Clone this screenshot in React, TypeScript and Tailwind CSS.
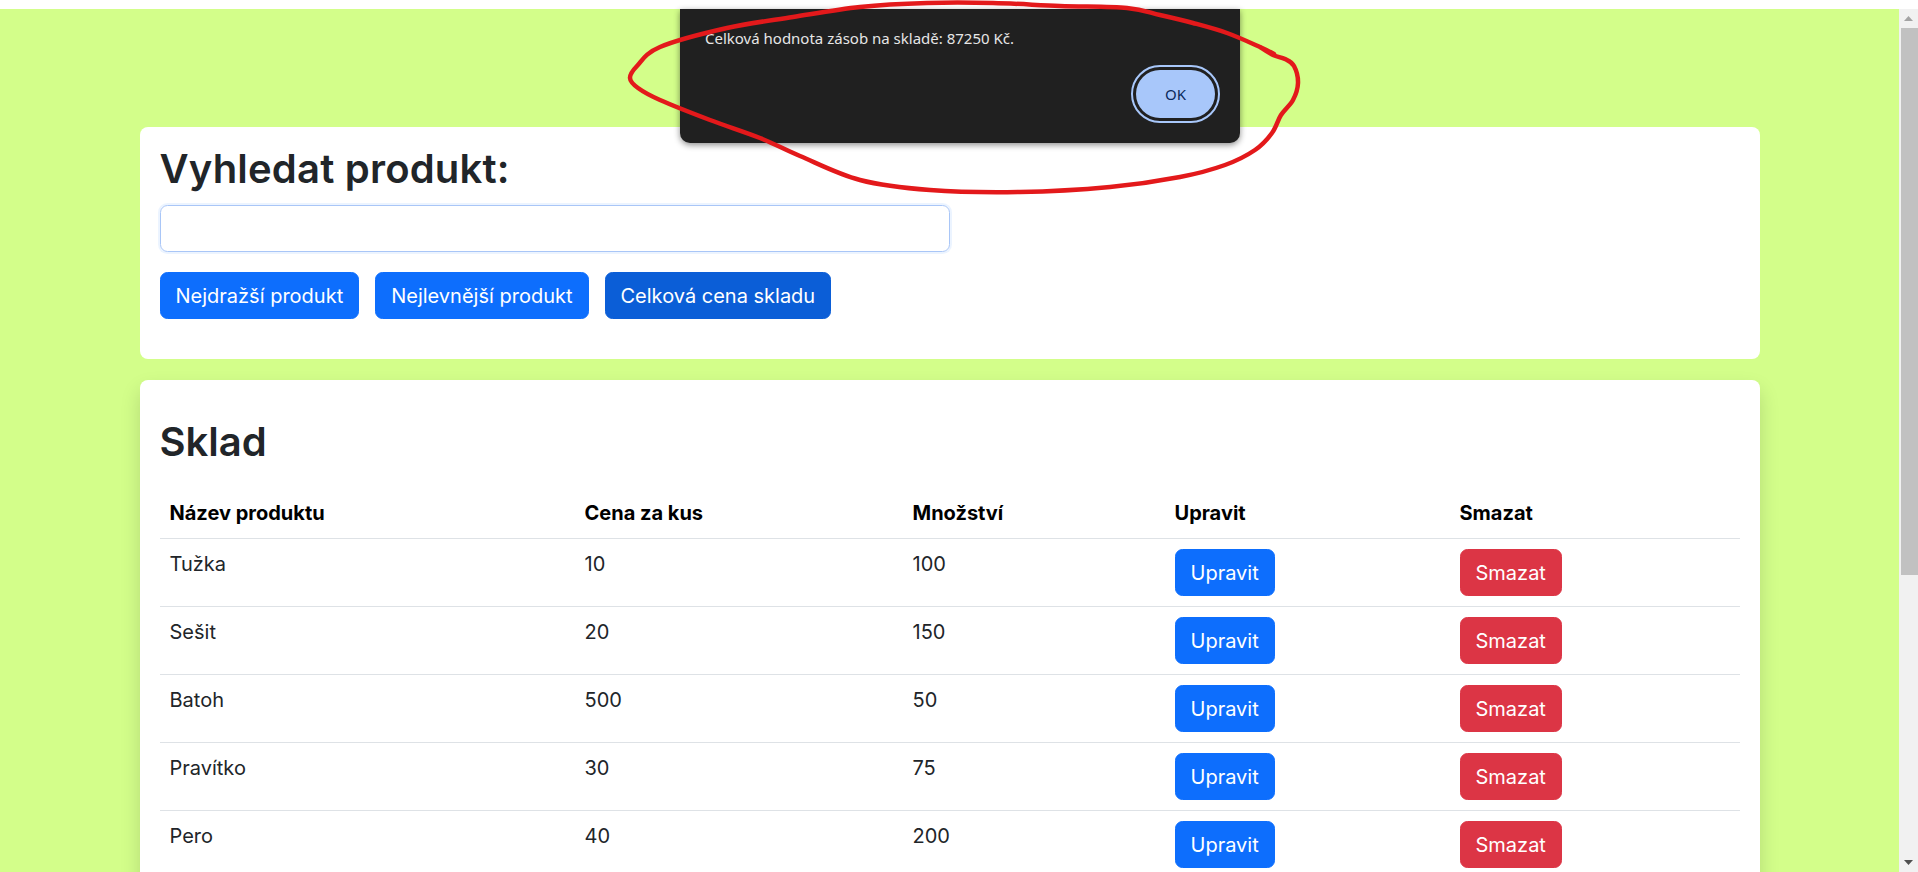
import { useState } from 'react'

type Product = { name: string; price: number; qty: number }

const PRODUCTS: Product[] = [
  { name: 'Tužka', price: 10, qty: 100 },
  { name: 'Sešit', price: 20, qty: 150 },
  { name: 'Batoh', price: 500, qty: 50 },
  { name: 'Pravítko', price: 30, qty: 75 },
  { name: 'Pero', price: 40, qty: 200 },
]

// freehand red loop drawn over the screenshot
const LOOP: [number, number][] = [
  [1260, 47], [1273, 55], [1285, 59], [1294, 66], [1298, 83], [1293, 100], [1281, 115],
  [1272, 133], [1255, 150], [1225, 165], [1180, 177], [1110, 187], [1020, 192], [930, 190],
  [860, 180], [800, 156], [760, 138], [710, 120], [660, 100], [638, 88], [630, 78], [637, 66],
  [660, 47], [727, 28], [793, 17], [860, 7], [927, 3], [993, 3], [1060, 6], [1127, 8],
  [1160, 15], [1193, 23], [1227, 33], [1260, 47], [1274, 54],
]

function smoothPath(pts: [number, number][]) {
  let d = `M ${pts[0][0]} ${pts[0][1]}`
  for (let i = 0; i < pts.length - 1; i++) {
    const p0 = pts[i - 1] ?? pts[i]
    const p1 = pts[i]
    const p2 = pts[i + 1]
    const p3 = pts[i + 2] ?? p2
    const c1x = p1[0] + (p2[0] - p0[0]) / 6
    const c1y = p1[1] + (p2[1] - p0[1]) / 6
    const c2x = p2[0] - (p3[0] - p1[0]) / 6
    const c2y = p2[1] - (p3[1] - p1[1]) / 6
    d += ` C ${c1x} ${c1y} ${c2x} ${c2y} ${p2[0]} ${p2[1]}`
  }
  return d
}

function Scrollbar() {
  return (
    <div className="w-[19px] shrink-0 bg-[#f1f1f1] flex flex-col items-stretch">
      <div className="h-[19px] flex items-center justify-center">
        <svg width="9" height="5" viewBox="0 0 9 5"><path d="M0 5 L4.5 0 L9 5 Z" fill="#a3a3a3" /></svg>
      </div>
      <div className="h-[547px] ml-[2px] bg-[#c1c1c1]" />
      <div className="flex-1" />
      <div className="h-[19px] flex items-center justify-center">
        <svg width="9" height="5" viewBox="0 0 9 5"><path d="M0 0 L4.5 5 L9 0 Z" fill="#505050" /></svg>
      </div>
    </div>
  )
}

function AlertDialog() {
  return (
    <div className="absolute left-[680px] top-[9px] w-[560px] h-[134px] bg-[#202020] rounded-b-[10px] shadow-[0_2px_6px_rgba(0,0,0,0.45)] flex flex-col justify-between pl-[25px] pr-[20px] pb-[20px] pt-[18px]">
      <p className="text-[15px] leading-[22px] text-[#e6e6e6] font-['Noto_Sans',sans-serif]">
        Celková hodnota zásob na skladě: 87250 Kč.
      </p>
      <div className="flex justify-end">
        <div className="rounded-full border-2 border-[#a8c7fa] p-[3px] bg-[#202020]">
          <button className="w-[79px] h-[48px] rounded-full bg-[#a8c7fa] text-[#0a2a5c] text-[15px] font-['Noto_Sans',sans-serif]">
            OK
          </button>
        </div>
      </div>
    </div>
  )
}

export default function App() {
  const [query, setQuery] = useState('')
  const rows = PRODUCTS.filter((p) => p.name.toLowerCase().includes(query.toLowerCase()))

  return (
    <div className="relative h-[872px] w-full overflow-hidden bg-white font-['Inter',sans-serif] text-[#212529]">
      <div className="h-[9px] bg-white" />
      <div className="flex h-[863px]">
        <main className="flex-1 bg-[#d3fe8a] pt-[118px]">
          <div className="mx-auto w-[1620px] flex flex-col gap-[21px]">
            {/* Search */}
            <section className="bg-white rounded-[8px] px-[20px] pt-[18px] pb-[40px]">
              <h2 className="text-[40px] leading-[48px] font-semibold tracking-[0.2px] mb-[12px]">Vyhledat produkt:</h2>
              <input
                value={query}
                onChange={(e) => setQuery(e.target.value)}
                className="block w-[790px] h-[47px] rounded-[7.5px] border border-[#a9c6f7] shadow-[0_0_0_2px_rgba(13,110,253,0.08)] px-[15px] text-[20px] outline-none"
              />
              <div className="flex gap-[16px] mt-[20px]">
                <button className="px-[15px] py-[7.5px] text-[20px] leading-[30px] text-white bg-[#0d6efd] border border-[#0d6efd] rounded-[7.5px]">
                  Nejdražší produkt
                </button>
                <button className="px-[15px] py-[7.5px] text-[20px] leading-[30px] text-white bg-[#0d6efd] border border-[#0d6efd] rounded-[7.5px]">
                  Nejlevnější produkt
                </button>
                <button className="px-[15px] py-[7.5px] text-[20px] leading-[30px] text-white bg-[#0b5ed7] border border-[#0b5ed7] rounded-[7.5px]">
                  Celková cena skladu
                </button>
              </div>
            </section>

            {/* Stock table */}
            <section className="bg-white rounded-[8px] px-[20px] pt-[38px] pb-[20px] shadow-[0_10px_20px_rgba(0,0,0,0.15)]">
              <h2 className="text-[40px] leading-[48px] font-semibold mb-[22px]">Sklad</h2>
              <table className="w-full table-fixed border-collapse text-[20px] leading-[30px]">
                <colgroup>
                  <col className="w-[415px]" />
                  <col className="w-[328px]" />
                  <col className="w-[262px]" />
                  <col className="w-[285px]" />
                  <col className="w-[290px]" />
                </colgroup>
                <thead>
                  <tr className="border-b border-[#dee2e6]">
                    <th className="p-[10px] text-left font-bold text-black">Název produktu</th>
                    <th className="p-[10px] text-left font-bold text-black">Cena za kus</th>
                    <th className="p-[10px] text-left font-bold text-black">Množství</th>
                    <th className="p-[10px] text-left font-bold text-black">Upravit</th>
                    <th className="p-[10px] text-left font-bold text-black">Smazat</th>
                  </tr>
                </thead>
                <tbody>
                  {rows.map((p) => (
                    <tr key={p.name} className="border-b border-[#dee2e6]">
                      <td className="p-[10px] align-top">{p.name}</td>
                      <td className="p-[10px] align-top">{p.price}</td>
                      <td className="p-[10px] align-top">{p.qty}</td>
                      <td className="p-[10px] align-top">
                        <button className="px-[15px] py-[7.5px] text-white bg-[#0d6efd] border border-[#0d6efd] rounded-[7.5px]">
                          Upravit
                        </button>
                      </td>
                      <td className="p-[10px] align-top">
                        <button className="px-[15px] py-[7.5px] text-white bg-[#dc3545] border border-[#dc3545] rounded-[7.5px]">
                          Smazat
                        </button>
                      </td>
                    </tr>
                  ))}
                </tbody>
              </table>
            </section>
          </div>
        </main>
        <Scrollbar />
      </div>

      <AlertDialog />

      <svg className="absolute inset-0 pointer-events-none" width="1918" height="872" viewBox="0 0 1918 872">
        <path d={smoothPath(LOOP)} fill="none" stroke="#e3191b" strokeWidth="4.5" strokeLinecap="round" strokeLinejoin="round" />
      </svg>
    </div>
  )
}
